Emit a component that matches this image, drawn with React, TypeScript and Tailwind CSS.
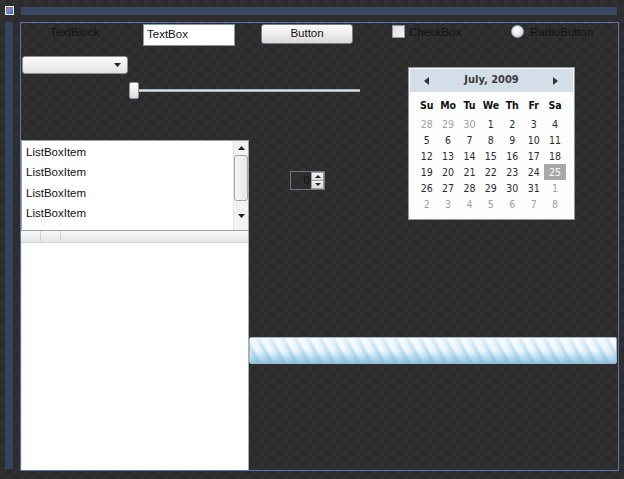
import React from "react";

const F = { fontFamily: '"Liberation Sans", Arial, sans-serif' } as const;
const CF = { fontFamily: '"DejaVu Sans Condensed", "DejaVu Sans", sans-serif' } as const;

type Day = { d: number; o?: boolean; sel?: boolean };

const weeks: Day[][] = [
  [{ d: 28, o: true }, { d: 29, o: true }, { d: 30, o: true }, { d: 1 }, { d: 2 }, { d: 3 }, { d: 4 }],
  [{ d: 5 }, { d: 6 }, { d: 7 }, { d: 8 }, { d: 9 }, { d: 10 }, { d: 11 }],
  [{ d: 12 }, { d: 13 }, { d: 14 }, { d: 15 }, { d: 16 }, { d: 17 }, { d: 18 }],
  [{ d: 19 }, { d: 20 }, { d: 21 }, { d: 22 }, { d: 23 }, { d: 24 }, { d: 25, sel: true }],
  [{ d: 26 }, { d: 27 }, { d: 28 }, { d: 29 }, { d: 30 }, { d: 31 }, { d: 1, o: true }],
  [{ d: 2, o: true }, { d: 3, o: true }, { d: 4, o: true }, { d: 5, o: true }, { d: 6, o: true }, { d: 7, o: true }, { d: 8, o: true }],
];

function Calendar() {
  return (
    <div
      className="absolute left-[387px] top-[44px] w-[167px] h-[153px] border border-[#8e979f] bg-[#fdfdfd] p-px"
      style={CF}
    >
      <div className="h-[23px] bg-[#d3dee9] flex items-center justify-between px-[14px]">
        <svg width="6" height="8" viewBox="0 0 6 8"><path d="M5 0 L0 4 L5 8 Z" fill="#333" /></svg>
        <span className="text-[11px] font-bold text-[#3a3a3a]">July, 2009</span>
        <svg width="6" height="8" viewBox="0 0 6 8"><path d="M0 0 L5 4 L0 8 Z" fill="#333" /></svg>
      </div>
      <div className="pl-[6px] pt-[5px]">
        <div className="grid grid-cols-[repeat(7,21.4px)] h-[19px] items-start">
          {["Su", "Mo", "Tu", "We", "Th", "Fr", "Sa"].map((n) => (
            <div key={n} className="text-center text-[10.5px] font-bold text-[#111] leading-[16px]">{n}</div>
          ))}
        </div>
        {weeks.map((w, i) => (
          <div key={i} className="grid grid-cols-[repeat(7,21.4px)] h-[16px]">
            {w.map((c, j) => (
              <div
                key={j}
                className={
                  "text-center text-[10.5px] leading-[16px] " +
                  (c.sel ? "bg-[#a8a8a8] text-white" : c.o ? "text-[#a0a0a0]" : "text-[#2a2a2a]")
                }
              >
                {c.d}
              </div>
            ))}
          </div>
        ))}
      </div>
    </div>
  );
}

function ListBox() {
  return (
    <div className="absolute left-0 top-[117px] w-[228px] h-[91px] bg-white border border-[#9aa2ac] flex" style={F}>
      <div className="flex-1 pt-px">
        {[0, 1, 2, 3].map((i) => (
          <div key={i} className="h-[20.4px] pl-[4px] text-[11.5px] leading-[20.4px] text-[#111]">ListBoxItem</div>
        ))}
      </div>
      <div className="w-[15px] bg-[#f2f2f2] border-l border-[#e4e4e4] flex flex-col items-center">
        <div className="h-[14px] flex items-center justify-center">
          <svg width="7" height="4" viewBox="0 0 7 4"><path d="M0 4 L3.5 0 L7 4 Z" fill="#222" /></svg>
        </div>
        <div className="w-[14px] h-[46px] rounded-[3px] border border-[#9ea4ab] bg-gradient-to-r from-[#f7f7f7] to-[#e6e6e6]" />
        <div className="flex-1 flex items-center justify-center">
          <svg width="7" height="4" viewBox="0 0 7 4"><path d="M0 0 L3.5 4 L7 0 Z" fill="#222" /></svg>
        </div>
      </div>
    </div>
  );
}

function DataGrid() {
  return (
    <div className="absolute left-0 top-[208px] w-[228px] h-[239px] bg-white border-r border-[#a7adb4] flex flex-col">
      <div className="h-[12px] flex bg-gradient-to-b from-[#f7f7f7] to-[#e4e6e8] border-b border-[#d4d7da]">
        <div className="w-[20px] border-r border-[#d0d3d6]" />
        <div className="w-[20px] border-r border-[#d0d3d6]" />
        <div className="flex-1" />
      </div>
      <div className="flex-1 bg-white border-l border-[#e0e4ea]" />
    </div>
  );
}

export default function App() {
  return (
    <div
      className="w-[624px] h-[479px] overflow-hidden bg-[#2e2e2e] bg-[repeating-conic-gradient(#2c2c2c_0%_25%,#303030_0%_50%)] bg-[length:12px_12px]"
      style={F}
    >
      {/* top row */}
      <div className="h-[22px] flex items-start pt-[6px] pl-[5px]">
        <div className="w-[9px] h-[9px] border border-[#e8e8e8] bg-gradient-to-br from-[#d04a4a] via-[#6b8fd0] to-[#3b63b8]" />
        <div className="ml-[7px] mt-px w-[596px] h-[8px] bg-[#3a4964]" />
      </div>
      {/* main row */}
      <div className="flex pl-[5px]">
        <div className="w-[8px] h-[447px] bg-[#36455f]" />
        <div className="ml-[7px] relative w-[599px] h-[449px] border border-[#5878b3]">
          {/* TextBlock */}
          <span className="absolute left-[29px] top-[2px] text-[11.5px] leading-[14px] text-[#121212]">TextBlock</span>
          {/* TextBox */}
          <div className="absolute left-[122px] top-px w-[92px] h-[22px] bg-white border border-[#8f98a3] flex items-center pl-[3px]">
            <span className="text-[11.5px] text-[#111]">TextBox</span>
          </div>
          {/* Button */}
          <div className="absolute left-[240px] top-px w-[92px] h-[20px] rounded-[3px] border border-[#7b7f85] bg-gradient-to-b from-[#fafafa] via-[#ececec] to-[#d9d9d9] flex items-center justify-center">
            <span className="text-[11.5px] text-[#111]">Button</span>
          </div>
          {/* CheckBox */}
          <div className="absolute left-[371px] top-[2px] w-[13px] h-[13px] border border-[#8d949c] bg-gradient-to-br from-[#dcdcdc] to-[#f8f8f8]" />
          <span className="absolute left-[388px] top-[2px] text-[11.5px] leading-[14px] text-[#121212]">CheckBox</span>
          {/* RadioButton */}
          <div className="absolute left-[490px] top-[2px] w-[13px] h-[13px] rounded-full border border-[#a0a4aa] bg-[radial-gradient(circle_at_40%_35%,#ffffff_0%,#e8e8e8_50%,#bdbdbd_100%)]" />
          <span className="absolute left-[509px] top-[2px] text-[11.5px] leading-[14px] text-[#121212]">RadioButton</span>
          {/* ComboBox */}
          <div className="absolute left-px top-[33px] w-[106px] h-[18px] rounded-[3px] border border-[#8a9097] bg-gradient-to-b from-[#fbfbfb] to-[#e3e3e3] flex items-center justify-end pr-[6px]">
            <svg width="7" height="4" viewBox="0 0 7 4"><path d="M0 0 L3.5 4 L7 0 Z" fill="#222" /></svg>
          </div>
          {/* Slider */}
          <div className="absolute left-[117px] top-[66px] w-[222px] h-[3px] bg-[#d9dee4] border-y border-[#a9b2bc]" />
          <div className="absolute left-[108px] top-[59px] w-[10px] h-[17px] rounded-[2px] border border-[#8b929a] bg-gradient-to-b from-[#ffffff] to-[#dcdcdc]" />
          {/* Calendar */}
          <Calendar />
          {/* ListBox */}
          <ListBox />
          {/* DataGrid */}
          <DataGrid />
          {/* NumericUpDown */}
          <div className="absolute left-[269px] top-[148px] w-[35px] h-[19px] border border-[#6f757d] flex">
            <div className="flex-1 flex items-center justify-end pr-[1px]">
              <span className="text-[11.5px] text-[#111] leading-none">0</span>
            </div>
            <div className="w-[13px] flex flex-col">
              <div className="flex-1 bg-gradient-to-b from-[#f4f4f4] to-[#d8d8d8] border border-[#9aa0a6] flex items-center justify-center">
                <svg width="6" height="3" viewBox="0 0 6 3"><path d="M0 3 L3 0 L6 3 Z" fill="#222" /></svg>
              </div>
              <div className="flex-1 bg-gradient-to-b from-[#f4f4f4] to-[#d8d8d8] border border-t-0 border-[#9aa0a6] flex items-center justify-center">
                <svg width="6" height="3" viewBox="0 0 6 3"><path d="M0 0 L3 3 L6 0 Z" fill="#222" /></svg>
              </div>
            </div>
          </div>
          {/* ProgressBar */}
          <div className="absolute left-[228px] top-[314px] w-[368px] h-[27px] rounded-[2px] border border-[#aab4bd] bg-[#eef6fb] overflow-hidden">
            <div className="w-full h-full bg-[repeating-linear-gradient(62deg,#f3f9fc_0px,#e6f2f9_4px,#b2d9ee_8px,#eef7fb_11px)]">
              <div className="w-full h-full bg-gradient-to-b from-[#ffffff90] via-[#ffffff20] to-[#5fb0d8aa]" />
            </div>
          </div>
        </div>
      </div>
    </div>
  );
}
